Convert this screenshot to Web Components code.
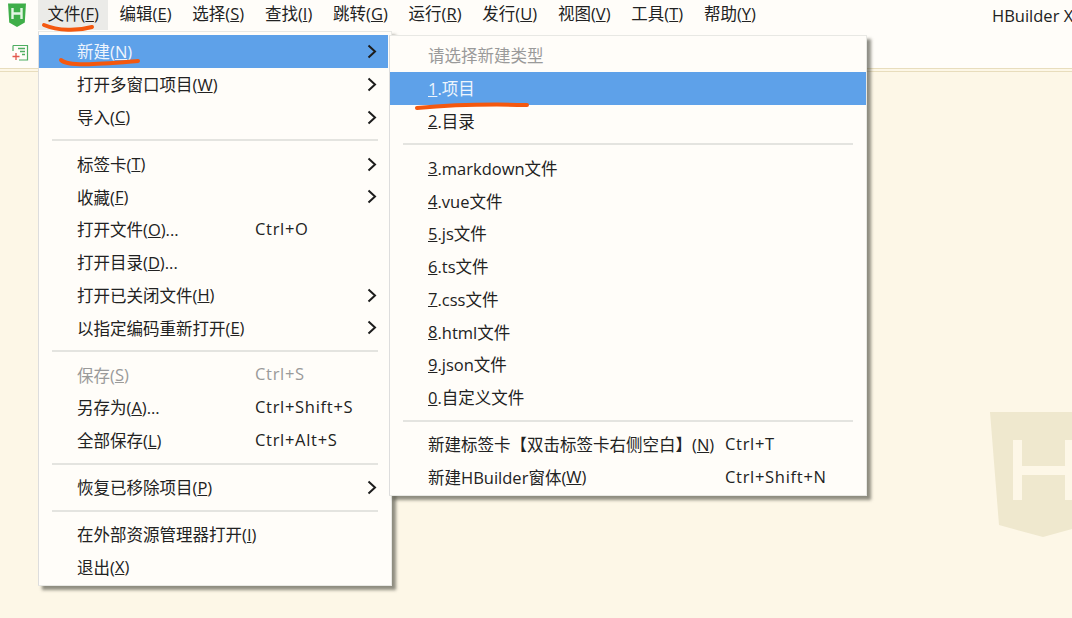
<!DOCTYPE html>
<html lang="zh"><head><meta charset="utf-8">
<style>
html,body{margin:0;padding:0;width:1072px;height:618px;overflow:hidden;background:#fdf7e7;font:16.5px "Open Sans","Noto Sans CJK SC",sans-serif;color:#222}
</style></head><body>
<app-shell>
  <menu-bar slot="bar">
    <bar-item active>文件(<u>F</u>)</bar-item><bar-item>编辑(<u>E</u>)</bar-item><bar-item>选择(<u>S</u>)</bar-item><bar-item>查找(<u>I</u>)</bar-item><bar-item>跳转(<u>G</u>)</bar-item><bar-item>运行(<u>R</u>)</bar-item><bar-item>发行(<u>U</u>)</bar-item><bar-item>视图(<u>V</u>)</bar-item><bar-item>工具(<u>T</u>)</bar-item><bar-item>帮助(<u>Y</u>)</bar-item>
  </menu-bar>
  <menu-panel slot="menus" style="left:38px;top:31px;width:354px;--pad-top:3px;--pad-right:3px;--sc:216px;--sep-l:13px;--sep-r:10px">
    <menu-row selected arrow>新建(<u>N</u>)</menu-row>
    <menu-row arrow>打开多窗口项目(<u>W</u>)</menu-row>
    <menu-row arrow>导入(<u>C</u>)</menu-row>
    <menu-sep></menu-sep>
    <menu-row arrow>标签卡(<u>T</u>)</menu-row>
    <menu-row arrow>收藏(<u>F</u>)</menu-row>
    <menu-row key="Ctrl+O">打开文件(<u>O</u>)...</menu-row>
    <menu-row>打开目录(<u>D</u>)...</menu-row>
    <menu-row arrow>打开已关闭文件(<u>H</u>)</menu-row>
    <menu-row arrow>以指定编码重新打开(<u>E</u>)</menu-row>
    <menu-sep></menu-sep>
    <menu-row disabled key="Ctrl+S">保存(<u>S</u>)</menu-row>
    <menu-row key="Ctrl+Shift+S">另存为(<u>A</u>)...</menu-row>
    <menu-row key="Ctrl+Alt+S">全部保存(<u>L</u>)</menu-row>
    <menu-sep></menu-sep>
    <menu-row arrow>恢复已移除项目(<u>P</u>)</menu-row>
    <menu-sep></menu-sep>
    <menu-row>在外部资源管理器打开(<u>I</u>)</menu-row>
    <menu-row>退出(<u>X</u>)</menu-row>
  </menu-panel>
  <menu-panel slot="menus" style="left:389px;top:35px;width:478px;--pad-top:3px;--pad-right:0px;--sc:335px;--sep-l:13px;--sep-r:13px">
    <menu-row disabled>请选择新建类型</menu-row>
    <menu-row selected><u>1</u>.项目</menu-row>
    <menu-row><u>2</u>.目录</menu-row>
    <menu-sep></menu-sep>
    <menu-row><u>3</u>.markdown文件</menu-row>
    <menu-row><u>4</u>.vue文件</menu-row>
    <menu-row><u>5</u>.js文件</menu-row>
    <menu-row><u>6</u>.ts文件</menu-row>
    <menu-row><u>7</u>.css文件</menu-row>
    <menu-row><u>8</u>.html文件</menu-row>
    <menu-row><u>9</u>.json文件</menu-row>
    <menu-row><u>0</u>.自定义文件</menu-row>
    <menu-sep></menu-sep>
    <menu-row key="Ctrl+T">新建标签卡【双击标签卡右侧空白】(<u>N</u>)</menu-row>
    <menu-row key="Ctrl+Shift+N">新建HBuilder窗体(<u>W</u>)</menu-row>
  </menu-panel>
</app-shell>
<script>
function def(name,html,init){customElements.define(name,class extends HTMLElement{constructor(){super();const r=this.attachShadow({mode:'open'});r.innerHTML=html;}connectedCallback(){if(init)init(this)}})}
def('app-shell',`<style>
:host{display:block;position:relative;width:1072px;height:618px;overflow:hidden}
.top{height:68px;background:#fffdf9;border-bottom:1px solid #e8ddbd;position:relative}
.row1{display:flex;align-items:center;height:30px}
.logo{width:38px;padding-left:8px;box-sizing:border-box;flex:none;display:flex}
.row2{display:flex;padding:14px 0 0 12px}
.title{margin-left:auto;white-space:nowrap;color:#222;width:80px;overflow:hidden}
.main{height:547px;margin-top:2px;background:#fdf7e7;border-top:1px solid #e8ddbd}
.wm{position:absolute;left:980px;top:405px}
.ink{position:absolute;left:0;top:0;pointer-events:none}
</style>
<div class="top">
  <div class="row1">
    <div class="logo"><svg width="18" height="26" viewBox="0 0 18 26"><path d="M0 1.5H18L16.8 20.5L9 25L1.2 20.5Z" fill="#3fae49"/><path d="M4.5 6v11M13.5 6v11M4.5 11.5h9" stroke="#e4f5e4" stroke-width="2.4" fill="none"/></svg></div>
    <slot name="bar"></slot>
    <div class="title">HBuilder X</div>
  </div>
  <div class="row2"><svg width="17" height="17" viewBox="0 0 17 17" fill="none"><path d="M1 1.5H15.5V16H7" stroke="#4fae62" stroke-width="1.2"/><path d="M1 1.5V7" stroke="#4fae62" stroke-width="1.2"/><path d="M6 4.5H13M8 7.5H13M10 10.5H13" stroke="#4fae62" stroke-width="1.6"/><path d="M0.5 12.5H7.5M4 9V16" stroke="#e2574c" stroke-width="1.3"/></svg></div>
</div>
<div class="main"></div>
<svg class="wm" width="92" height="135" viewBox="980 405 92 135"><path fill-rule="evenodd" fill="#efe8ce" d="M990 412H1096L1087 525L1043 537L999 525ZM1013 440V500H1022V475H1065V500H1074V440H1065V466H1022V440Z"/></svg>
<slot name="menus"></slot>
<svg class="ink" width="1072" height="618" fill="none" stroke="#f4580f" stroke-width="4" stroke-linecap="round">
  <path d="M44 25C58 31 78 31 92 27"/>
  <path d="M61 60C68 67 100 64 138 61"/>
  <path d="M417 108C450 105 490 104 527 105"/>
</svg>`);
def('menu-bar',`<style>:host{display:flex;align-items:center;height:30px;gap:1.8px}</style><slot></slot>`);
def('bar-item',`<style>:host{display:block;padding:0 9.5px;height:30px;line-height:28px;white-space:nowrap;color:#222;box-sizing:border-box}
:host([active]){background:#ebebe8}</style><slot></slot>`);
def('menu-panel',`<style>:host{display:block;position:absolute;box-sizing:border-box;background:#fffdf9;border:1px solid #e8e8e4;border-left-color:#ddd;padding:var(--pad-top) var(--pad-right) 2px 0;box-shadow:4px 4px 3px rgba(70,70,60,.6)}</style><slot></slot>`);
def('menu-row',`<style>:host{display:flex;align-items:center;height:32.75px;position:relative;white-space:nowrap;color:#222;padding-left:38px;box-sizing:border-box}
:host([selected]){background:#5ea1e9;color:#eef5fd}
:host([disabled]){color:#9a9a9a}
.key{position:absolute;left:var(--sc);top:0;line-height:32.75px;letter-spacing:.7px}
.arrow{position:absolute;right:11px;top:9px}
</style><slot></slot><span class="key"></span><svg class="arrow" width="10" height="15" viewBox="0 0 10 15" fill="none" stroke="#1d1d1d" stroke-width="2"><path d="M1.5 1.5L8 7.5L1.5 13.5"/></svg>`,
el=>{const s=el.shadowRoot;s.querySelector('.key').textContent=el.getAttribute('key')||'';if(!el.hasAttribute('arrow'))s.querySelector('.arrow').remove();});
def('menu-sep',`<style>:host{display:block;height:14.25px;box-sizing:border-box;padding-top:6px}
div{height:2px;background:#e4e4e0;margin:0 var(--sep-r) 0 var(--sep-l)}</style><div></div>`);
</script>
</body></html>
